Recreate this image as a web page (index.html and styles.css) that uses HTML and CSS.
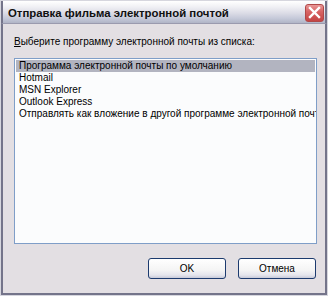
FILE: index.html
```html
<!DOCTYPE html>
<html>
<head>
<meta charset="utf-8">
<link rel="stylesheet" href="styles.css">
</head>
<body>
<div class="window">
  <div class="titlebar">
    <span class="title">Отправка фильма электронной почтой</span>
    <span class="close">
      <svg width="13" height="13" viewBox="0 0 13 13"><path d="M2 2 L11 11 M11 2 L2 11" stroke="#fff" stroke-width="2.4" stroke-linecap="square"/></svg>
    </span>
  </div>
  <div class="frame">
    <div class="label"><u>В</u>ыберите программу электронной почты из списка:</div>
    <div class="listbox">
      <div class="item selected">Программа электронной почты по умолчанию</div>
      <div class="item">Hotmail</div>
      <div class="item">MSN Explorer</div>
      <div class="item">Outlook Express</div>
      <div class="item">Отправлять как вложение в другой программе электронной почты</div>
    </div>
    <div class="buttons">
      <button class="btn">OK</button>
      <button class="btn">Отмена</button>
    </div>
  </div>
</div>
</body>
</html>
```

FILE: styles.css
```css
html, body {
  margin: 0;
  padding: 0;
  background: #e3dfe3;
}
.window {
  width: 328px;
  height: 296px;
  box-sizing: border-box;
  border: 1px solid #d6d6de;
  display: flex;
  flex-direction: column;
  font-family: "Liberation Sans", Arial, sans-serif;
  font-size: 10px;
  color: #000;
}
.titlebar {
  height: 22px;
  flex: none;
  display: flex;
  align-items: center;
  justify-content: space-between;
  padding: 0 1px 0 5px;
  background: linear-gradient(#ffffff 0%, #f1f1f5 25%, #dcdce6 55%, #c4c8d8 80%, #b0b4c6 100%);
  border-left: 2px solid #74748a;
  border-right: 2px solid #74748a;
  border-bottom: 1px solid #9a9aae;
}
.title {
  font-weight: bold;
  font-size: 11.4px;
  color: #101010;
  padding-top: 2px;
}
.close {
  width: 19px;
  height: 18px;
  box-sizing: border-box;
  border: 1px solid #b04848;
  border-radius: 3px;
  background: linear-gradient(#e99898 0%, #d86464 40%, #c44444 100%);
  display: flex;
  align-items: center;
  justify-content: center;
  margin-top: 1px;
}
.frame {
  flex: 1;
  display: flex;
  flex-direction: column;
  border: 2px solid #74748a;
  border-top: none;
  padding: 11px 8px 0 11px;
}
.label {
  line-height: 13px;
  height: 13px;
}
.listbox {
  margin-top: 10px;
  height: 186px;
  width: 303px;
  box-sizing: border-box;
  border: 1px solid #7f9ec8;
  background: #fbfcfd;
  padding: 1px;
  overflow: hidden;
}
.item {
  height: 12px;
  line-height: 12px;
  padding-left: 3px;
  white-space: nowrap;
}
.selected {
  background: #b2b4c0;
}
.buttons {
  display: flex;
  justify-content: flex-end;
  gap: 12px;
  margin-top: 14px;
  padding-right: 1px;
}
.btn {
  width: 78px;
  height: 21px;
  box-sizing: border-box;
  border: 1px solid #1c3a6e;
  border-radius: 3px;
  background: linear-gradient(#ffffff 0%, #f4f4f4 60%, #e4e4ec 85%, #c8cad8 100%);
  font-family: "Liberation Sans", Arial, sans-serif;
  font-size: 10px;
  color: #000;
  padding: 0;
}
```
